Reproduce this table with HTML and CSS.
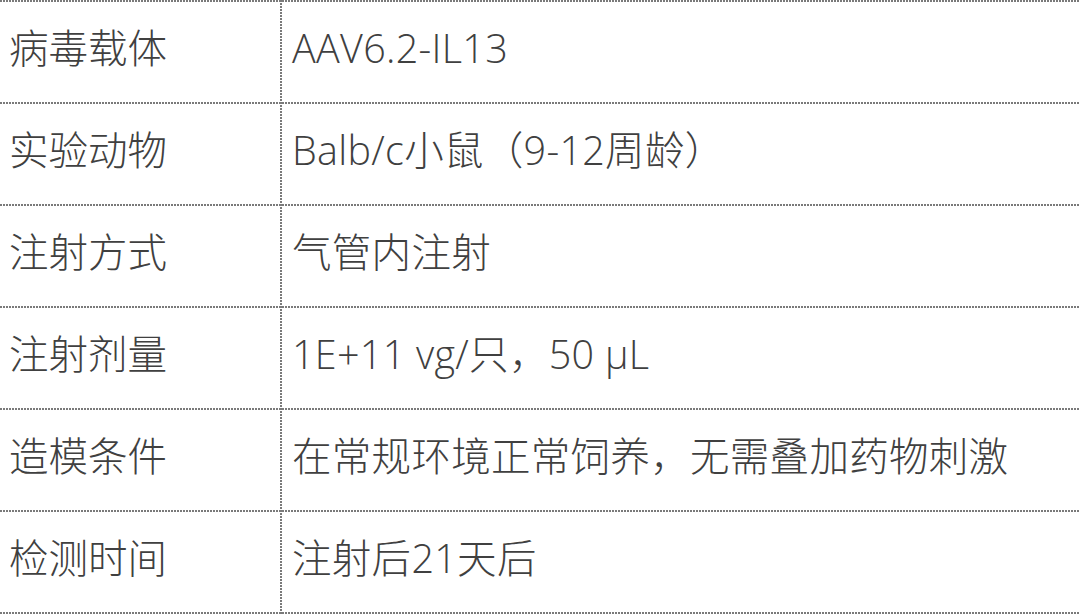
FILE: index.html
```html
<!DOCTYPE html>
<html lang="zh">
<head>
<meta charset="utf-8">
<link rel="stylesheet" href="styles.css">
</head>
<body>
<div class="table">
  <div class="row"><div class="label">病毒载体</div><div class="value">AAV6.2-IL13</div></div>
  <div class="row"><div class="label">实验动物</div><div class="value">Balb/c小鼠（9-12周龄）</div></div>
  <div class="row"><div class="label">注射方式</div><div class="value">气管内注射</div></div>
  <div class="row"><div class="label">注射剂量</div><div class="value">1E+11 vg/只，50 μL</div></div>
  <div class="row"><div class="label">造模条件</div><div class="value">在常规环境正常饲养，无需叠加药物刺激</div></div>
  <div class="row last"><div class="label">检测时间</div><div class="value">注射后21天后</div></div>
</div>
</body>
</html>
```
FILE: styles.css
```css
html, body {
  margin: 0;
  padding: 0;
  background: #ffffff;
}
body {
  font-family: "Open Sans", "Noto Sans CJK SC", sans-serif;
  font-weight: 300;
  color: #404040;
  font-size: 39.5px;
  overflow: hidden;
}
.table {
  width: 1080px;
  display: flex;
  flex-direction: column;
}
.row {
  display: grid;
  grid-template-columns: 282px 1fr;
  height: 102px;
  background-image: repeating-linear-gradient(90deg, #7a7a7a 0 2px, transparent 2px 3px);
  background-size: 100% 2px;
  background-position: top left;
  background-repeat: no-repeat;
}
.row.last {
  height: 104px;
  background-image:
    repeating-linear-gradient(90deg, #7a7a7a 0 2px, transparent 2px 3px),
    repeating-linear-gradient(90deg, #7a7a7a 0 2px, transparent 2px 3px);
  background-size: 100% 2px, 100% 2px;
  background-position: top left, bottom left;
  background-repeat: no-repeat, no-repeat;
}
.label, .value {
  display: flex;
  align-items: center;
  padding-bottom: 4px;
  line-height: 1;
  white-space: nowrap;
}
.row.last .label, .row.last .value {
  padding-bottom: 6px;
}
.label {
  padding-left: 9px;
  background-image: repeating-linear-gradient(180deg, #7a7a7a 0 2px, transparent 2px 3px);
  background-size: 2px 100%;
  background-position: right 0 top 0;
  background-repeat: no-repeat;
}
.value {
  padding-left: 10px;
  letter-spacing: 0.3px;
}
```
